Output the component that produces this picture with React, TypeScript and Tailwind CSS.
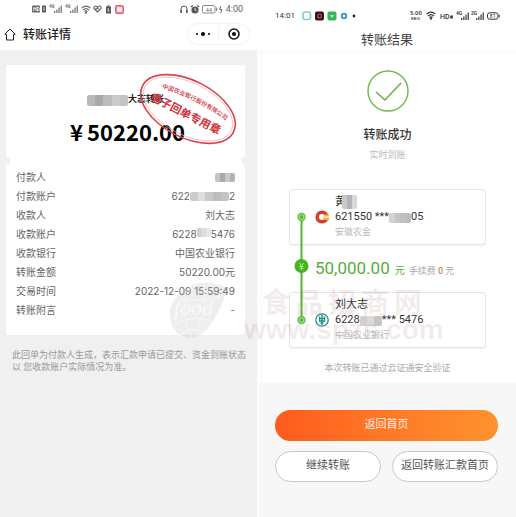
import type { ReactNode } from "react";

const CJK = "font-['Roboto','Noto_Sans_CJK_SC',sans-serif]";

function Mosaic({ shades, className }: { shades: string[]; className: string }) {
  return (
    <span aria-hidden="true" className={`inline-flex overflow-hidden rounded-xs ${className}`}>
      {shades.map((s, i) => (
        <span key={i} className={`h-full flex-1 ${s}`} />
      ))}
    </span>
  );
}

function Signal({ label, color = "#555" }: { label: string; color?: string }) {
  return (
    <svg width="14" height="10" viewBox="0 0 14 10" fill={color} aria-hidden="true">
      <text x="0" y="4" fontSize="5" fontFamily="Roboto" fontWeight="700">{label}</text>
      <rect x="5" y="7" width="1.3" height="2" />
      <rect x="7.2" y="5.5" width="1.3" height="3.5" />
      <rect x="9.4" y="3.5" width="1.3" height="5.5" />
      <rect x="11.6" y="1.5" width="1.3" height="7.5" />
    </svg>
  );
}

function Wifi({ color = "#555" }: { color?: string }) {
  return (
    <svg width="10" height="9" viewBox="0 0 10 9" fill="none" stroke={color} strokeWidth="1.1" aria-hidden="true">
      <path d="M.6 3.2Q5-1 9.4 3.2M2 5Q5 2.2 8 5M3.4 6.7Q5 5.2 6.6 6.7" />
      <circle cx="5" cy="7.8" r=".5" fill={color} />
    </svg>
  );
}

function LeftStatus() {
  return (
    <div className="flex h-[18px] items-center pr-[14px] pl-8 text-[#666]">
      <svg width="15" height="8" viewBox="0 0 15 8" aria-hidden="true">
        <rect y=".5" width="8" height="7" rx="1" fill="#666" />
        <text x="1" y="6" fontSize="5" fill="#fff" fontFamily="Roboto" fontWeight="700">HD</text>
        <rect x="10" y=".5" width="4" height="7" rx="1" fill="#555" />
        <path d="M12 2v4" stroke="#fff" strokeWidth=".8" />
      </svg>
      <span className="ml-0.5 flex gap-0.5">
        <Signal label="46" color="#777" />
        <Signal label="46" color="#777" />
      </span>
      <span className="ml-0.5"><Wifi color="#666" /></span>
      <svg className="ml-0.5" width="9" height="8" viewBox="0 0 9 8" fill="none" stroke="#666" strokeWidth="1.2" aria-hidden="true">
        <path d="M4.5 7 1 3.4Q.8 1 2.8 1 4 1 4.5 2.2 5 1 6.2 1 8.2 1 8 3.4ZM2 4h1.5l1-1.5 1 2" />
      </svg>
      <svg className="ml-[3px]" width="7" height="9" viewBox="0 0 7 9" aria-hidden="true">
        <path d="M2.5.5h2v1H6v7H1v-7h1.5Z" fill="#555" />
        <path d="M4 2.8 2.6 5h1.6L3 7" stroke="#fff" strokeWidth=".7" fill="none" />
      </svg>
      <svg className="ml-[3px]" width="9" height="9" viewBox="0 0 9 9" aria-hidden="true">
        <rect x=".8" y=".8" width="7.4" height="7.4" rx="1.5" fill="#f9d5da" stroke="#dc5b6c" strokeWidth="1.5" />
        <path d="M2.5 4.5h4" stroke="#fff" strokeWidth="2" />
      </svg>
      <svg className="ml-auto" width="8" height="9" viewBox="0 0 8 9" fill="none" stroke="#555" aria-hidden="true">
        <path d="M1 6V4a3 3 0 0 1 6 0v2" />
        <path d="M1.2 5v3M6.8 5v3" strokeWidth="1.6" />
      </svg>
      <svg className="ml-0.5" width="10" height="9" viewBox="0 0 10 9" aria-hidden="true">
        <circle cx="5" cy="5" r="3.6" fill="#555" />
        <path d="M.8 2 3 .6M9.2 2 7 .6" stroke="#555" strokeWidth="1.2" />
        <path d="M5 2.8V5l1.6 1" stroke="#fff" strokeWidth=".8" fill="none" />
      </svg>
      <svg className="ml-0.5" width="22" height="9" viewBox="0 0 22 9" aria-hidden="true">
        <rect x=".5" y=".5" width="12.5" height="7.5" rx="1.5" fill="none" stroke="#888" />
        <text x="3.5" y="6.8" fontSize="6" fill="#777" fontFamily="Roboto">44</text>
        <rect x="14" y="2.5" width="1.2" height="3.5" fill="#888" />
        <path d="M18.8 1 17.6 4.5h2.2L18.6 8" stroke="#666" fill="none" />
      </svg>
      <span className="ml-0.5 text-[9px] leading-none">4:00</span>
    </div>
  );
}

function Stamp() {
  return (
    <svg className="absolute top-[6px] right-[7px]" width="100" height="76" viewBox="-50 -38 100 76" role="img" aria-label="印章">
      <defs>
        <path id="arc" d="M-38-6Q3-14 44-6" />
      </defs>
      <g transform="rotate(27)" fill="#d22f3a" fontFamily="'Noto Sans CJK SC', sans-serif" textAnchor="middle">
        <ellipse rx="51" ry="28.5" fill="none" stroke="#d8434c" strokeWidth="1.6" />
        <ellipse rx="48.5" ry="26" fill="none" stroke="#eeb0b3" strokeWidth=".7" />
        <text fontSize="6" fontWeight="500"><textPath href="#arc" startOffset="50%">中国农业银行股份有限公司</textPath></text>
        <text x="0" y="9" fontSize="11" fontWeight="700">电子回单专用章</text>
      </g>
    </svg>
  );
}

function Row({ label, children }: { label: string; children: ReactNode }) {
  return (
    <div className="flex h-[19px] items-center justify-between">
      <dt>{label}</dt>
      <dd className="flex items-center">{children}</dd>
    </div>
  );
}

function ReceiptPanel() {
  return (
    <section className="flex flex-col bg-white pr-px">
      <LeftStatus />
      <header className="flex h-8 items-center pr-[7px] pl-1">
        <button aria-label="首页">
          <svg width="12" height="13" viewBox="0 0 12 13" fill="none" stroke="#222" strokeWidth="1" strokeLinejoin="round">
            <path d="M6 1 .8 6.2h1.7V12h7V6.2h1.7Z" />
          </svg>
        </button>
        <h1 className="ml-[7px] pt-0.5 text-[12px] font-medium text-[#222]">转账详情</h1>
        <div className="ml-auto flex h-[22px] w-[63px] items-center rounded-full border border-[#f3f3f3]">
          <button aria-label="更多" className="flex flex-1 items-center justify-center gap-[3px]">
            <span className="size-[2px] rounded-full bg-black" />
            <span className="size-1 rounded-full bg-black" />
            <span className="size-[2px] rounded-full bg-black" />
          </button>
          <span className="h-4 w-px bg-[#f0f0f0]" />
          <button aria-label="关闭" className="flex flex-1 justify-center">
            <svg width="12" height="12" viewBox="0 0 12 12">
              <circle cx="6" cy="6" r="5" fill="none" stroke="#111" strokeWidth="1.5" />
              <circle cx="6" cy="6" r="2.1" fill="#111" />
            </svg>
          </button>
        </div>
      </header>
      <div className="flex-1 bg-[#f0f0f0] pt-[15px] pr-3 pl-1.5">
        <div className="relative h-24 rounded-t-xs bg-white pt-7">
          <p className="flex h-[14px] items-center justify-center text-[9px] font-bold text-[#222]">
            <Mosaic className="h-[11px] w-[41px]" shades={["bg-[#b9b9b9]", "bg-[#a9a9a9]", "bg-[#bcbcbc]", "bg-[#cbcbcb]", "bg-[#c4c4c4]"]} />
            大志转账
          </p>
          <p className="mt-2.5 flex h-7 items-center justify-center gap-1 pl-1 font-['Noto_Sans_CJK_SC',sans-serif] text-[22px] font-bold text-black">
            <span>¥</span>
            <span>50220.00</span>
          </p>
          <Stamp />
          <span className="absolute -bottom-1 -left-1 size-2 rounded-full bg-[#f0f0f0]" />
          <span className="absolute -right-1 -bottom-1 size-2 rounded-full bg-[#f0f0f0]" />
        </div>
        <dl className="rounded-b-xs bg-white px-2.5 pt-[7px] pb-[15px] font-['Inter','Noto_Sans_CJK_SC',sans-serif] text-[10px] text-[#666]">
          <Row label="付款人">
            <Mosaic className="h-[9px] w-5" shades={["bg-[#c4c4c4]", "bg-[#aaa]", "bg-[#c9c9c9]", "bg-[#b4b4b4]"]} />
          </Row>
          <Row label="付款账户">
            622
            <Mosaic className="h-[9px] w-[39px]" shades={["bg-[#ccc]", "bg-[#dedede]", "bg-[#c8c8c8]", "bg-[#bdbdbd]", "bg-[#c4c4c4]"]} />
            2
          </Row>
          <Row label="收款人">刘大志</Row>
          <Row label="收款账户">
            6228
            <Mosaic className="mb-1 h-[9px] w-[14px]" shades={["bg-[#cfcfcf]", "bg-[#dcdcdc]", "bg-[#e6e6e6]"]} />
            5476
          </Row>
          <Row label="收款银行">中国农业银行</Row>
          <Row label="转账金额">50220.00元</Row>
          <Row label="交易时间">2022-12-09 15:59:49</Row>
          <Row label="转账附言">-</Row>
        </dl>
        <p className="mt-[14px] ml-1.5 text-[9px] leading-3 whitespace-nowrap text-[#999]">
          此回单为付款人生成，表示汇款申请已提交、资金到账状态
          <br />以 您收款账户实际情况为准。
        </p>
      </div>
    </section>
  );
}

function RightStatus() {
  return (
    <div className="flex h-7 items-center pt-[3px] pr-4 pl-[17px] text-[#333]">
      <span className="text-[8px]">14:01</span>
      <svg className="ml-[7px]" width="54" height="10" viewBox="0 0 54 10" aria-hidden="true">
        <rect x="1" y="1" width="7.5" height="7.5" rx="2" fill="#fff" stroke="#7fd0c4" strokeWidth="1.6" />
        <rect x="13" y=".5" width="9" height="9" rx="2" fill="#2a1416" />
        <circle cx="17.5" cy="5" r="2" fill="none" stroke="#d34650" strokeWidth="1.2" />
        <rect x="25.5" y=".5" width="9" height="9" rx="2" fill="#35b759" />
        <path d="M28 4h4L30 7Z" fill="#b9f0c5" />
        <circle cx="42" cy="5" r="2.2" fill="#fff" stroke="#3f9ad4" strokeWidth="2" />
        <circle cx="52" cy="5" r="1.4" fill="#222" />
      </svg>
      <svg className="ml-auto" width="12" height="11" viewBox="0 0 12 11" fill="#333" fontFamily="Roboto" fontWeight="500" aria-hidden="true">
        <text x="0" y="5" fontSize="6">5.00</text>
        <text x="1" y="10" fontSize="4">KB/S</text>
      </svg>
      <span className="ml-1"><Wifi color="#333" /></span>
      <svg className="ml-1" width="13" height="9" viewBox="0 0 13 9" fill="#333" fontFamily="Roboto" fontWeight="500" aria-hidden="true">
        <text x="0" y="7.5" fontSize="7">HD</text>
        <rect x="10.3" y="4.5" width="2.5" height="3" />
      </svg>
      <span className="ml-[3px] flex gap-px">
        <Signal label="4G" color="#444" />
        <Signal label="2G" color="#444" />
      </span>
      <svg className="ml-0.5" width="13" height="8" viewBox="0 0 13 8" aria-hidden="true">
        <rect x=".5" y=".8" width="10.5" height="6.4" rx="2" fill="none" stroke="#333" />
        <text x="2.6" y="6" fontSize="5.5" fill="#333" fontFamily="Roboto">81</text>
        <rect x="11.7" y="2.8" width="1" height="2.5" fill="#333" />
      </svg>
    </div>
  );
}

function AccountCard({ logo, name, number, bank }: { logo: ReactNode; name: ReactNode; number: ReactNode; bank: string }) {
  return (
    <div className="flex h-14 items-center rounded-sm border border-[#e6e6ea] bg-white pl-[25px] shadow-xs">
      <span className="flex w-5 shrink-0">{logo}</span>
      <div className="text-[11px] text-[#333]">
        <p className="flex h-4 items-center">{name}</p>
        <p className="flex h-[15px] items-center whitespace-nowrap">{number}</p>
        <p className="flex h-[15px] items-center text-[9px] text-[#bbb]">{bank}</p>
      </div>
    </div>
  );
}

function Timeline() {
  return (
    <svg className="absolute top-[20px] left-[5px]" width="15" height="120" viewBox="0 0 15 120" aria-hidden="true">
      <path d="M7.5 8v104" stroke="#4fb82b" strokeWidth="2" />
      {[8, 111].map((y) => (
        <g key={y}>
          <circle cx="7.5" cy={y} r="4.2" fill="#5fc33c" />
          <circle cx="7.5" cy={y} r="2.4" fill="#55bb30" stroke="#c3eab2" strokeWidth=".8" />
        </g>
      ))}
      <circle cx="7.5" cy="57" r="7" fill="#42b51f" />
      <path d="m5.500 54 2 3 2-3M7.500 57v4M5.500 57.500h4M5.500 59.300h4" stroke="#d8f5cc" strokeWidth=".8" fill="none" />
    </svg>
  );
}

function ResultPanel() {
  return (
    <section className="flex flex-col bg-white">
      <RightStatus />
      <h1 className="flex h-[25px] items-center justify-center border-b border-[#f7f7f7] text-[13px] text-[#444]">转账结果</h1>
      <div className="ml-[3px] border-l border-[#fafafa] pr-[30px] pb-[7px] pl-[27px]">
        <svg className="mx-auto mt-[17px]" width="42" height="42" viewBox="0 0 42 42" fill="none" aria-hidden="true">
          <circle cx="21" cy="21" r="20" stroke="#6dbb4c" strokeWidth="1.4" />
          <path d="m9 22 9 8 16-17" stroke="#6dab55" strokeWidth="1.5" />
        </svg>
        <h2 className="mt-[13px] text-center text-[12px] leading-5 font-medium text-[#333]">转账成功</h2>
        <p className="mt-[3px] text-center text-[9px] leading-[14px] text-[#bbb]">实时到账</p>
        <div className="relative mt-[27px]">
          <AccountCard
            logo={
              <svg width="14" height="14" viewBox="0 0 14 14" aria-hidden="true">
                <circle cx="7" cy="7" r="4.8" fill="none" stroke="#d3412c" strokeWidth="3.6" />
                <path d="M7 7h7V4.5H9.500ZM7 7h7v3H9.500Z" fill="#f1b64a" />
                <path d="M7 7h7" stroke="#fff" />
              </svg>
            }
            name={
              <>
                <span>黄</span>
                <Mosaic className="relative -ml-1 h-[14px] w-[15px]" shades={["bg-[#c9c9c9]", "bg-[#b4b4b4]", "bg-[#d8d8d8]"]} />
              </>
            }
            number={
              <>
                <span>621550 ***</span>
                <Mosaic className="h-2.5 w-[22px]" shades={["bg-[#d2d2d2]", "bg-[#c6c6c6]", "bg-[#c0c0c0]", "bg-[#bbb]"]} />
                <span>05</span>
              </>
            }
            bank="安徽农金"
          />
          <p className="flex h-[47px] items-baseline pt-[11px] pl-[26px] text-[9px] whitespace-nowrap text-[#aaa]">
            <span className="text-[17px] leading-6 text-[#57ab3b]">50,000.00</span>
            <span className="ml-[5px] text-[10px] text-[#57ab3b]">元</span>
            <span className="ml-1">手续费 <span className="font-medium text-[#d08a64]">0</span> 元</span>
          </p>
          <AccountCard
            logo={
              <svg width="14" height="14" viewBox="0 0 14 14" fill="none" stroke="#1c8f86" aria-hidden="true">
                <circle cx="7" cy="7" r="6.2" strokeWidth="1.3" />
                <path d="M7 2v10M4.5 3.5v4.5h5V3.5M5 5.5h4M5.5 10h3" strokeWidth="1.3" />
              </svg>
            }
            name="刘大志"
            number={
              <>
                <span>6228</span>
                <Mosaic className="h-2.5 w-[22px]" shades={["bg-[#d0d0d0]", "bg-[#dadada]", "bg-[#c6c6c6]"]} />
                <span>*** 5476</span>
              </>
            }
            bank="中国农业银行"
          />
          <Timeline />
        </div>
        <p className="mt-3 text-center text-[9px] leading-4 text-[#aaa]">本次转账已通过云证通安全验证</p>
      </div>
      <div className="flex-1 bg-[#f7f7f7] pt-[27px] pr-[18px] pl-[17px] text-[11px] text-[#555]">
        <button className="h-[31px] w-full rounded-full bg-linear-to-r from-[#ff5a1e] to-[#ff922e] text-[#fff0e4]">返回首页</button>
        <div className="mt-2.5 grid grid-cols-2 gap-[11px]">
          <button className="h-[31px] rounded-full border border-[#c8c8c8] bg-white">继续转账</button>
          <button className="h-[31px] rounded-full border border-[#c8c8c8] bg-white whitespace-nowrap">返回转账汇款首页</button>
        </div>
      </div>
    </section>
  );
}

function Watermark() {
  return (
    <div aria-hidden="true" className="pointer-events-none absolute top-[282px] left-[168px] flex font-['Noto_Sans_CJK_SC',sans-serif] font-bold text-[#a06464]/12">
      <svg width="62" height="62" viewBox="0 0 62 62" fill="none">
        <path d="M60 6Q30-8 10 13-6 32 9 51 26 62 40 46 50 34 60 6Z" fill="#aaa" fillOpacity=".2" />
        <g stroke="#fff" strokeOpacity=".4" strokeWidth="1.5">
          <path d="M6 42Q28 32 46 40M12 53Q26 44 36 50M23 4Q10 30 24 56M36 2Q36 12 36 20M30 36Q34 46 28 56M12 16Q30 22 54 14" />
        </g>
        <text x="6" y="33" fontSize="22" fontStyle="italic" fontWeight="400" fontFamily="'Liberation Serif', serif" fill="#fff" fillOpacity=".7">food</text>
      </svg>
      <div className="ml-3.5">
        <p className="ml-[18px] flex gap-[5px] text-[28px] leading-[38px]">
          {["食", "品", "招", "商", "网"].map((c) => (
            <span key={c}>{c}</span>
          ))}
        </p>
        <p className="font-['Liberation_Sans',sans-serif] text-[28px] leading-5">www.spzs.com</p>
      </div>
    </div>
  );
}

export default function App() {
  return (
    <main className={`relative grid min-h-screen grid-cols-2 overflow-hidden ${CJK}`}>
      <ReceiptPanel />
      <ResultPanel />
      <Watermark />
    </main>
  );
}
